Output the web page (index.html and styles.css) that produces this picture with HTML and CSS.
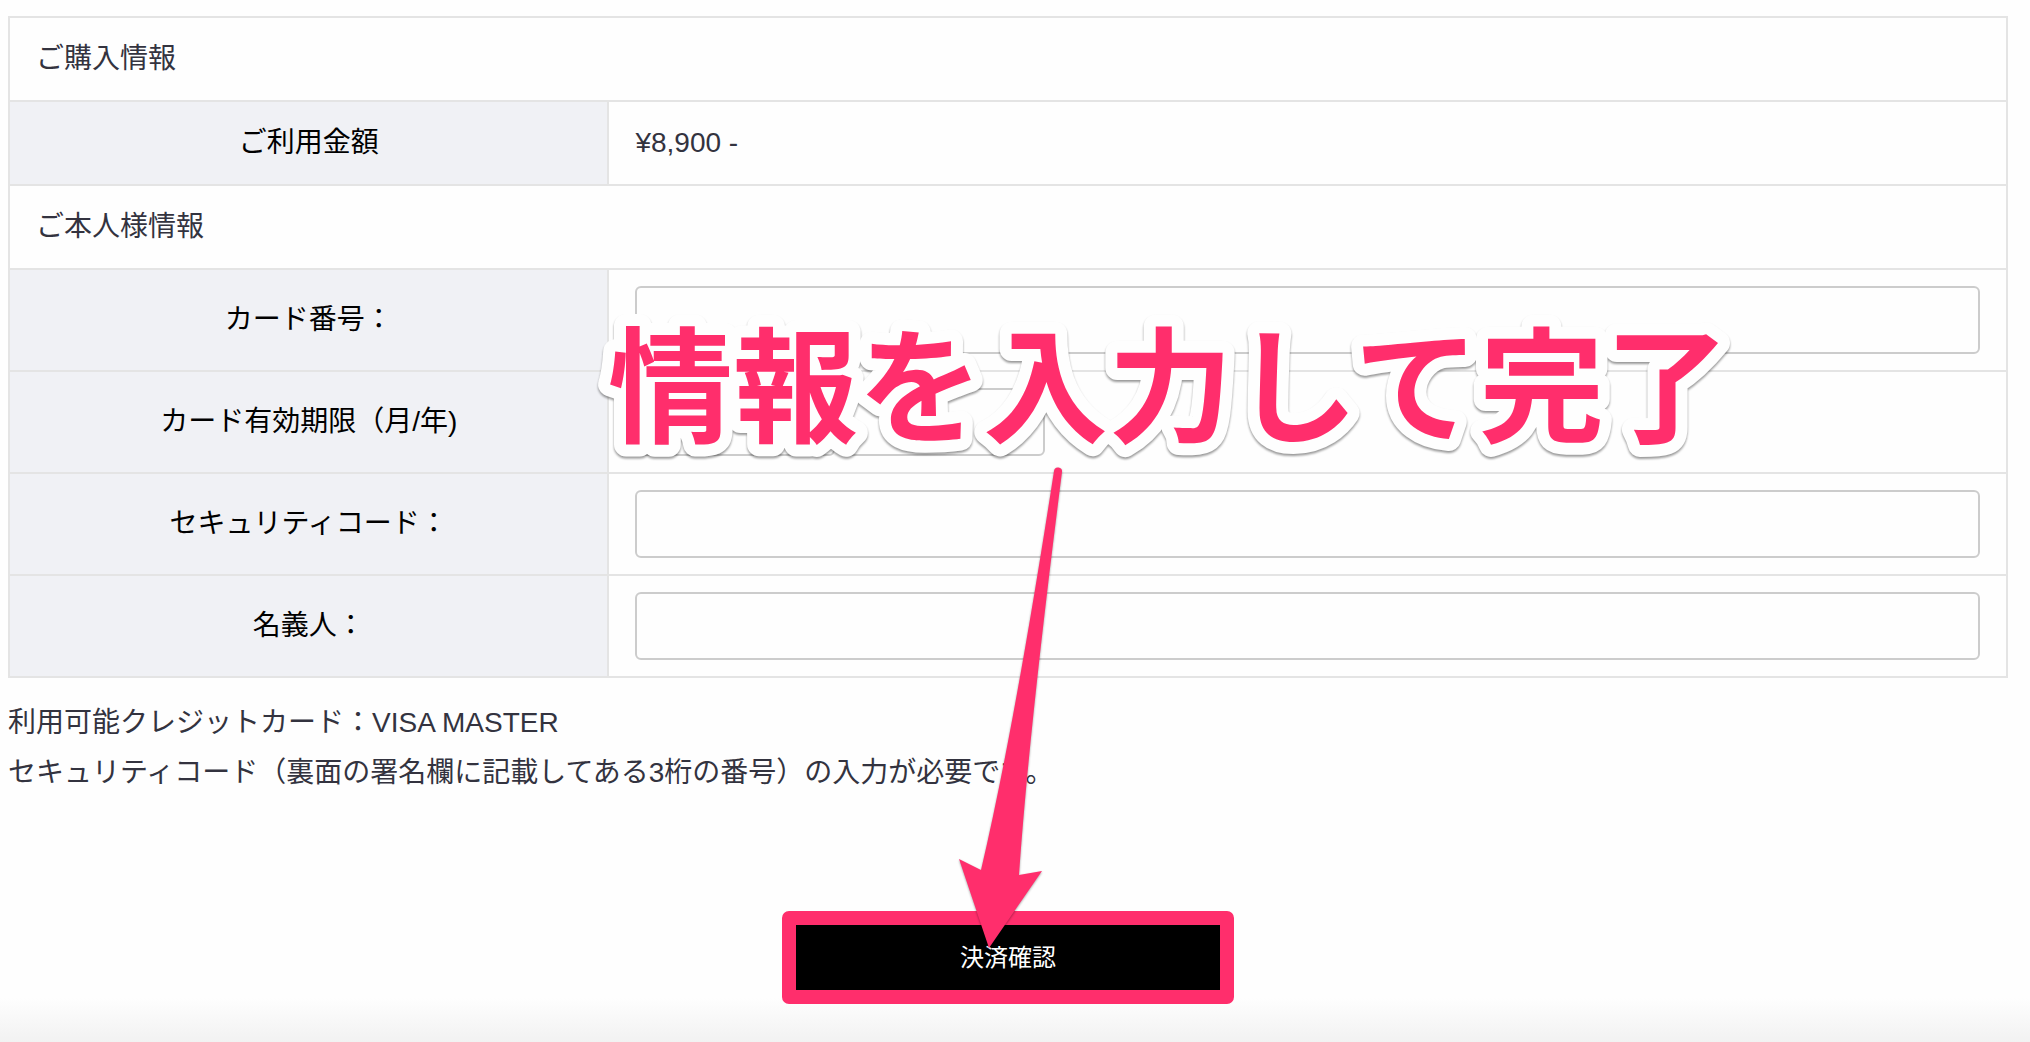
FILE: index.html
```html
<!DOCTYPE html>
<html lang="ja">
<head>
    <meta charset="UTF-8">
    <meta name="viewport" content="width=device-width, initial-scale=1.0">
    <title>決済確認</title>
    <link rel="stylesheet" href="styles.css">
</head>
<body>
    <form class="payment">
        <table class="payment-table">
            <colgroup>
                <col class="col-label">
                <col>
            </colgroup>
            <tr>
                <td colspan="2">ご購入情報</td>
            </tr>
            <tr>
                <th>ご利用金額</th>
                <td>¥8,900 -</td>
            </tr>
            <tr>
                <td colspan="2">ご本人様情報</td>
            </tr>
            <tr>
                <th><label for="card-number">カード番号：</label></th>
                <td><input type="text" id="card-number"></td>
            </tr>
            <tr>
                <th><label for="exp-month" id="exp-label">カード有効期限（月/年)</label></th>
                <td>
                    <div class="expiry">
                        <select id="exp-month"></select>
                        <select id="exp-year" aria-labelledby="exp-label"></select>
                    </div>
                </td>
            </tr>
            <tr>
                <th><label for="security-code">セキュリティコード：</label></th>
                <td><input type="text" id="security-code"></td>
            </tr>
            <tr>
                <th><label for="holder">名義人：</label></th>
                <td><input type="text" id="holder"></td>
            </tr>
        </table>

        <div class="notes">
            <p>利用可能クレジットカード：VISA MASTER</p>
            <p>セキュリティコード（裏面の署名欄に記載してある3桁の番号）の入力が必要です。</p>
        </div>

        <button type="button" class="submit">決済確認</button>
    </form>

    <!-- guide drawn over the form -->
    <svg class="guide" width="1180" height="700" viewBox="590 260 1180 700">
        <text class="guide-text" x="608" y="433">情報を入力して完了</text>
        <path class="guide-arrow" d="M1054 471 A4 4 0 0 1 1062 472 Q1029 730 1019 875 L1042 871 L989 948 L959 859 L981 870 Q1014 730 1054 471 Z" />
    </svg>
</body>
</html>
```
FILE: styles.css
```css
* {
    box-sizing: border-box;
}

body {
    position: relative;
    margin: 0;
    padding: 16px 22px 38px 8px;
    min-height: 100vh;
    font-family: "Liberation Sans", "Noto Sans CJK JP", sans-serif;
    font-size: 28px;
    line-height: 50px;
    color: #33333f;
    background: linear-gradient(#fefefe, #f2f2f2) bottom / 100% 44px no-repeat #fefefe;
}

.payment {
    display: flex;
    flex-direction: column;
}

.payment-table {
    width: 100%;
    border-collapse: collapse;
    table-layout: fixed;
}

.col-label {
    width: 30%;
}

.payment-table th,
.payment-table td {
    border: 2px solid #e4e4e4;
    padding: 16px 26px;
    text-align: left;
}

.payment-table th {
    background-color: #f0f1f5;
    color: #000;
    font-weight: normal;
    text-align: center;
}

.payment-table input,
.payment-table select {
    display: block;
    width: 100%;
    height: 68px;
    padding: 0 16px;
    border: 2px solid #ccc;
    border-radius: 6px;
    background-color: #fefefe;
    font: inherit;
    color: inherit;
    appearance: none;
}

.expiry {
    display: flex;
    gap: 10px;
}

.payment-table .expiry select {
    width: 200px;
}

.notes {
    margin-top: 20px;
}

.notes p {
    margin: 0;
}

.submit {
    align-self: center;
    width: 452px;
    height: 93px;
    margin-top: 113px;
    padding: 0 0 4px;
    border: 14px solid #ff2e6c;
    border-radius: 7px;
    background-color: #000;
    color: #fff;
    font-family: inherit;
    font-size: 24px;
}

.guide {
    position: absolute;
    left: 590px;
    top: 260px;
    overflow: visible;
    pointer-events: none;
}

.guide-text {
    font-family: "Noto Sans CJK JP", sans-serif;
    font-size: 125px;
    font-weight: bold;
    fill: #ff2e6c;
    stroke: #fefefe;
    stroke-width: 24px;
    stroke-linejoin: round;
    paint-order: stroke fill;
    filter: drop-shadow(0 2px 1px rgba(0, 0, 0, 0.4));
}

.guide-arrow {
    fill: #ff2e6c;
    filter: drop-shadow(0 1px 1px rgba(0, 0, 0, 0.35));
}
```
